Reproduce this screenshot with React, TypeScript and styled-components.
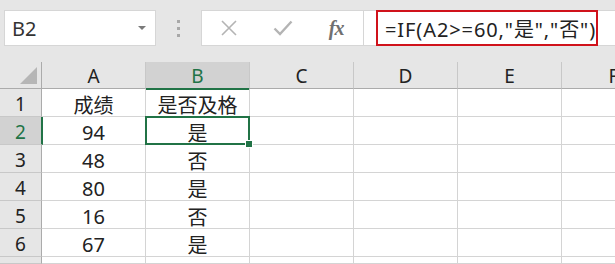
import React from "react";
import styled, { createGlobalStyle, css } from "styled-components";

const GlobalStyle = createGlobalStyle`
  html, body { margin: 0; padding: 0; background: #e6e6e6; overflow: hidden; }
  body { font-family: "Noto Sans", "Noto Sans CJK SC", sans-serif; }
`;

const Page = styled.div`
  width: 615px;
  height: 264px;
  display: flex;
  flex-direction: column;
  background: #e6e6e6;
  overflow: hidden;
`;

const Toolbar = styled.div`
  display: flex;
  align-items: stretch;
  height: 36px;
  padding: 10px 0 16px 4px;
`;

const NameBox = styled.div`
  width: 152px;
  display: flex;
  align-items: center;
  justify-content: space-between;
  background: #fff;
  border: 1px solid #d6d6d6;
  padding: 0 9px 0 7px;
  box-sizing: border-box;
  font-size: 20px;
  color: #333;
`;

const Caret = styled.span`
  width: 0;
  height: 0;
  border-left: 4px solid transparent;
  border-right: 4px solid transparent;
  border-top: 4px solid #7a7a7a;
`;

const Grip = styled.div`
  width: 45px;
  display: flex;
  flex-direction: column;
  align-items: center;
  justify-content: center;
  gap: 4px;
`;

const GripDot = styled.span`
  width: 3px;
  height: 3px;
  background: #a8a8a8;
`;

const FormulaBar = styled.div`
  flex: 1;
  display: flex;
  background: #fff;
  border: 1px solid #d6d6d6;
  border-right: none;
`;

const IconArea = styled.div`
  width: 162px;
  display: flex;
  align-items: center;
  border-right: 1px solid #d6d6d6;
  box-sizing: border-box;
`;

const IconSlot = styled.div`
  width: 54px;
  display: flex;
  justify-content: center;
  align-items: center;
`;

const Fx = styled.span`
  font-family: "Liberation Serif", serif;
  font-style: italic;
  font-weight: bold;
  font-size: 20px;
  color: #707070;
  letter-spacing: -1px;
`;

const Input = styled.div`
  flex: 1;
  display: flex;
  align-items: stretch;
  padding: 0 0 0 12px;
  margin-top: -1px;
  margin-bottom: -1px;
`;

const Highlight = styled.div`
  width: 222px;
  box-sizing: border-box;
  border: 2px solid #d0121b;
  display: flex;
  align-items: center;
  padding-left: 7px;
  font-size: 20px;
  letter-spacing: 0.9px;
  color: #222;
  white-space: nowrap;
  overflow: hidden;
`;

const Sheet = styled.div`
  flex: 1;
  display: grid;
  grid-template-columns: 42px repeat(6, 104px);
  grid-template-rows: 27px repeat(6, 28px) 1fr;
  background: #fff;
  overflow: hidden;
`;

const Corner = styled.div`
  background: #e6e6e6;
  border-right: 1px solid #ababab;
  border-bottom: 1px solid #ababab;
  position: relative;
  &::after {
    content: "";
    position: absolute;
    right: 4px;
    bottom: 4px;
    width: 0;
    height: 0;
    border-left: 17px solid transparent;
    border-bottom: 17px solid #b6b6b6;
  }
`;

const ColHead = styled.div<{ $active?: boolean }>`
  background: ${(p) => (p.$active ? "#d2d2d2" : "#e6e6e6")};
  border-right: 1px solid #c8c8c8;
  border-bottom: ${(p) => (p.$active ? "2px solid #217346" : "1px solid #ababab")};
  margin-bottom: ${(p) => (p.$active ? "-1px" : "0")};
  display: flex;
  align-items: center;
  justify-content: center;
  font-size: 19px;
  color: ${(p) => (p.$active ? "#217346" : "#222")};
  padding-top: 2px;
  box-sizing: border-box;
`;

const RowHead = styled.div<{ $active?: boolean }>`
  background: ${(p) => (p.$active ? "#d2d2d2" : "#e6e6e6")};
  border-bottom: 1px solid #c8c8c8;
  border-right: ${(p) => (p.$active ? "2px solid #217346" : "1px solid #ababab")};
  margin-right: ${(p) => (p.$active ? "-1px" : "0")};
  display: flex;
  align-items: center;
  justify-content: center;
  font-size: 19px;
  color: ${(p) => (p.$active ? "#217346" : "#222")};
  padding-top: 2px;
  box-sizing: border-box;
  position: relative;
  z-index: 1;
`;

const Cell = styled.div<{ $selected?: boolean }>`
  border-right: 1px solid #d4d4d4;
  border-bottom: 1px solid #d4d4d4;
  display: flex;
  align-items: center;
  justify-content: center;
  font-size: 20px;
  color: #222;
  padding-top: 3px;
  box-sizing: border-box;
  position: relative;
  ${(p) =>
    p.$selected &&
    css`
      &::before {
        content: "";
        position: absolute;
        left: -1px;
        top: -1px;
        right: -1px;
        bottom: -1px;
        border: 2px solid #217346;
      }
      &::after {
        content: "";
        position: absolute;
        right: -4px;
        bottom: -4px;
        width: 6px;
        height: 6px;
        background: #217346;
        border: 1px solid #fff;
        z-index: 2;
      }
    `}
`;

const cols = ["A", "B", "C", "D", "E", "F"];
const data: [string, string][] = [
  ["成绩", "是否及格"],
  ["94", "是"],
  ["48", "否"],
  ["80", "是"],
  ["16", "否"],
  ["67", "是"],
];

export default function App() {
  return (
    <Page>
      <GlobalStyle />
      <Toolbar>
        <NameBox>
          <span>B2</span>
          <Caret />
        </NameBox>
        <Grip>
          <GripDot />
          <GripDot />
          <GripDot />
        </Grip>
        <FormulaBar>
          <IconArea>
            <IconSlot>
              <svg width="18" height="16" viewBox="0 0 18 16">
                <path d="M2 1 L16 15 M16 1 L2 15" stroke="#b4b4b4" strokeWidth="1.6" fill="none" />
              </svg>
            </IconSlot>
            <IconSlot>
              <svg width="20" height="16" viewBox="0 0 20 16">
                <path d="M1.5 8.5 L7 14 L18.5 1.5" stroke="#b4b4b4" strokeWidth="2.4" fill="none" />
              </svg>
            </IconSlot>
            <IconSlot>
              <Fx>fx</Fx>
            </IconSlot>
          </IconArea>
          <Input>
            <Highlight>=IF(A2&gt;=60,"是","否")</Highlight>
          </Input>
        </FormulaBar>
      </Toolbar>
      <Sheet>
        <Corner />
        {cols.map((c) => (
          <ColHead key={c} $active={c === "B"}>
            {c}
          </ColHead>
        ))}
        {data.map((row, i) => (
          <React.Fragment key={i}>
            <RowHead $active={i === 1}>{i + 1}</RowHead>
            <Cell>{row[0]}</Cell>
            <Cell $selected={i === 1}>{row[1]}</Cell>
            <Cell />
            <Cell />
            <Cell />
            <Cell />
          </React.Fragment>
        ))}
        <RowHead />
        <Cell />
        <Cell />
        <Cell />
        <Cell />
        <Cell />
        <Cell />
      </Sheet>
    </Page>
  );
}
